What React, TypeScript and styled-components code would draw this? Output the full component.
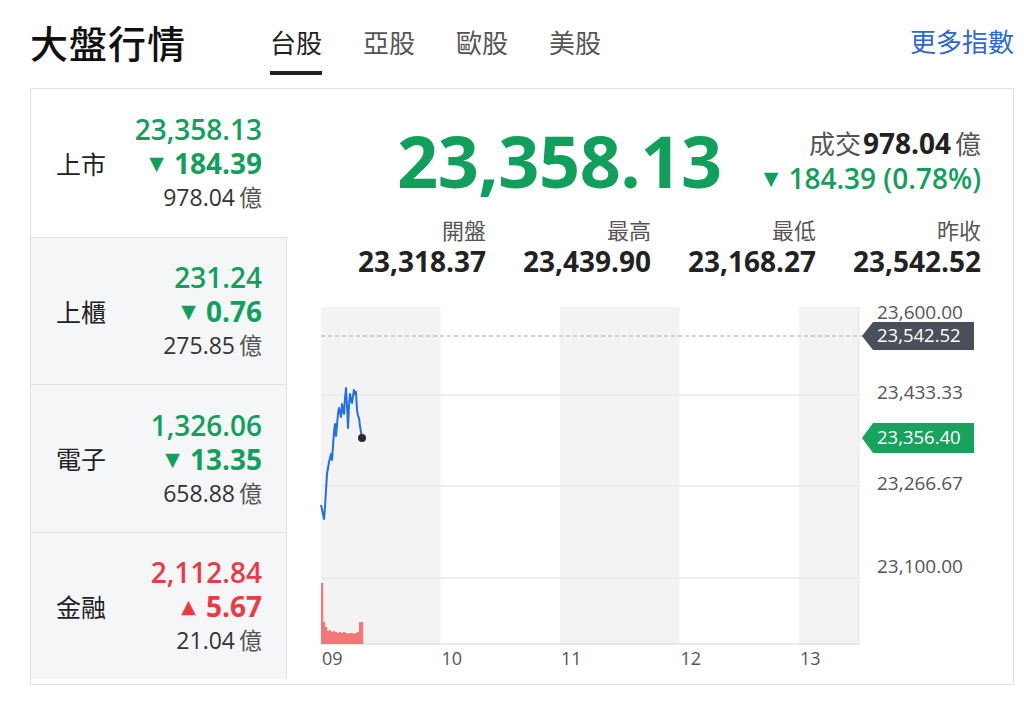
import React from "react";
import styled, { createGlobalStyle } from "styled-components";

const GREEN = "#11a05c";
const RED = "#ec3a44";

const GlobalStyle = createGlobalStyle`
  html, body {
    margin: 0;
    padding: 0;
    background: #ffffff;
    font-family: "Open Sans", "Noto Sans CJK TC", sans-serif;
    color: #222;
  }
`;

type Market = {
  name: string;
  price: string;
  change: string;
  volume: string;
  up: boolean;
};

const markets: Market[] = [
  { name: "上市", price: "23,358.13", change: "184.39", volume: "978.04", up: false },
  { name: "上櫃", price: "231.24", change: "0.76", volume: "275.85", up: false },
  { name: "電子", price: "1,326.06", change: "13.35", volume: "658.88", up: false },
  { name: "金融", price: "2,112.84", change: "5.67", volume: "21.04", up: true },
];

const stats = [
  { label: "開盤", value: "23,318.37" },
  { label: "最高", value: "23,439.90" },
  { label: "最低", value: "23,168.27" },
  { label: "昨收", value: "23,542.52" },
];

const tabs = ["台股", "亞股", "歐股", "美股"];

const App = () => {
  return (
    <>
      <GlobalStyle />
      <Page>
        <Header>
          <Title>大盤行情</Title>
          <Tabs>
            {tabs.map((t, i) => (
              <Tab key={t} active={i === 0}>
                {t}
              </Tab>
            ))}
          </Tabs>
          <MoreLink>更多指數</MoreLink>
        </Header>
        <Panel>
          <MarketList>
            {markets.map((m, i) => (
              <MarketRow key={m.name} selected={i === 0}>
                <MarketName>{m.name}</MarketName>
                <MarketValues>
                  <MarketPrice up={m.up}>{m.price}</MarketPrice>
                  <MarketChange up={m.up}>
                    <Arrow>{m.up ? "▲" : "▼"}</Arrow>
                    {m.change}
                  </MarketChange>
                  <MarketVolume>
                    {m.volume}
                    <Unit>億</Unit>
                  </MarketVolume>
                </MarketValues>
              </MarketRow>
            ))}
          </MarketList>
          <Detail>
            <Summary>
              <BigPrice>23,358.13</BigPrice>
              <SummaryInfo>
                <Turnover>
                  <Muted>成交</Muted>
                  <strong>978.04</strong>
                  <Muted>億</Muted>
                </Turnover>
                <SummaryChange>
                  <Arrow>▼</Arrow>184.39 (0.78%)
                </SummaryChange>
              </SummaryInfo>
            </Summary>
            <StatGrid>
              {stats.map((s) => (
                <Stat key={s.label}>
                  <StatLabel>{s.label}</StatLabel>
                  <StatValue>{s.value}</StatValue>
                </Stat>
              ))}
            </StatGrid>
            <Chart />
          </Detail>
        </Panel>
      </Page>
    </>
  );
};

export default App;

// intraday line, in chart coordinates
const linePoints: [number, number][] = [
  [0, 203], [2, 212], [3, 217], [4, 205], [6, 172], [8, 160], [10, 152], [11, 158],
  [13, 130], [14, 122], [15, 134], [17, 112], [18, 106], [20, 115], [21, 102],
  [22, 108], [23, 112], [24, 96], [25, 86], [26, 104], [27, 126], [28, 104],
  [29, 92], [30, 98], [31, 101], [32, 94], [33, 88], [34, 92], [35, 90],
  [36, 108], [37, 114], [38, 116], [39, 124], [41, 136],
];

const volumeBars: [number, number][] = [
  [0, 281], [2, 320], [4, 325], [6, 329], [8, 328], [10, 330], [12, 329], [14, 330],
  [16, 331], [18, 330], [20, 331], [22, 330], [24, 331], [26, 332], [28, 331],
  [30, 331], [32, 332], [34, 331], [36, 330], [38, 320], [40, 320],
];

const Chart = () => {
  const plotW = 538;
  const top = 5;
  const bottom = 342;
  const bands = [0, 119.5, 239, 358.5, 478];
  const gridYs = [93, 184, 276];
  const axis = [
    { y: 12, v: "23,600.00" },
    { y: 92, v: "23,433.33" },
    { y: 183, v: "23,266.67" },
    { y: 266, v: "23,100.00" },
  ];
  const path = linePoints.map(([x, y], i) => `${i ? "L" : "M"}${x} ${y}`).join(" ");

  return (
    <ChartSvg width={660} height={380} viewBox="0 0 660 380">
      <rect x={0} y={top} width={plotW} height={bottom - top} fill="#ffffff" />
      {bands.map((x, i) =>
        i % 2 === 0 ? (
          <rect key={x} x={x} y={top} width={Math.min(119.5, plotW - x)} height={bottom - top} fill="#f3f3f4" />
        ) : null
      )}
      {gridYs.map((y) => (
        <line key={y} x1={0} x2={plotW} y1={y} y2={y} stroke="#e9e9eb" strokeWidth={1.5} />
      ))}
      <line x1={0} x2={plotW} y1={bottom} y2={bottom} stroke="#e2e2e4" strokeWidth={1.5} />
      <line x1={plotW} x2={plotW} y1={top} y2={bottom} stroke="#e6e6e8" strokeWidth={1} />
      <line x1={0} x2={545} y1={34} y2={34} stroke="#a9a9ad" strokeWidth={1.2} strokeDasharray="4 3" />

      {volumeBars.map(([x, y]) => (
        <rect key={x} x={x} y={y} width={2.2} height={bottom - y} fill="#f47676" />
      ))}
      <path d={path} fill="none" stroke="#1f6fe5" strokeWidth={2} strokeLinejoin="round" />
      <circle cx={41} cy={136} r={4} fill="#2b2b2b" />

      {axis.map((a) => (
        <text key={a.v} x={556} y={a.y} dominantBaseline="middle" fontSize={19} fill="#555">
          {a.v}
        </text>
      ))}

      <g>
        <path d="M541 34 L552 20 H653 V48 H552 Z" fill="#4a5059" />
        <text x={556} y={35} dominantBaseline="middle" fontSize={18.5} fill="#ffffff">
          23,542.52
        </text>
      </g>
      <g>
        <path d="M541 136 L552 121 H653 V151 H552 Z" fill="#17a25e" />
        <text x={556} y={137} dominantBaseline="middle" fontSize={18.5} fill="#ffffff">
          23,356.40
        </text>
      </g>

      {bands.map((x, i) => (
        <text key={x} x={x + 1} y={358} dominantBaseline="middle" fontSize={18} fill="#555">
          {["09", "10", "11", "12", "13"][i]}
        </text>
      ))}
    </ChartSvg>
  );
};

const Page = styled.div`
  width: 1024px;
  padding: 0 10px 0 30px;
  box-sizing: border-box;
`;

const Header = styled.div`
  display: flex;
  align-items: flex-start;
  height: 88px;
`;

const Title = styled.div`
  font-family: "Noto Sans CJK TC", sans-serif;
  font-size: 38px;
  font-weight: 500;
  line-height: 84px;
  color: #111;
  letter-spacing: 1px;
`;

const Tabs = styled.div`
  display: flex;
  gap: 41px;
  margin-left: 84px;
`;

const Tab = styled.div<{ active?: boolean }>`
  box-sizing: border-box;
  height: 75px;
  padding-top: 12px;
  display: flex;
  align-items: center;
  font-family: "Noto Sans CJK TC", sans-serif;
  font-size: 26px;
  color: ${({ active }) => (active ? "#222" : "#555")};
  border-bottom: 4px solid ${({ active }) => (active ? "#222" : "transparent")};
`;

const MoreLink = styled.a`
  margin-left: auto;
  font-family: "Noto Sans CJK TC", sans-serif;
  font-size: 26px;
  line-height: 82px;
  color: #2d68d2;
  cursor: pointer;
`;

const Panel = styled.div`
  display: flex;
  width: 984px;
  height: 597px;
  box-sizing: border-box;
  border: 1px solid #e1e1e3;
`;

const MarketList = styled.div`
  display: flex;
  flex-direction: column;
  width: 256px;
  flex-shrink: 0;
`;

const MarketRow = styled.div<{ selected?: boolean }>`
  height: 147.5px;
  box-sizing: border-box;
  display: flex;
  align-items: center;
  justify-content: space-between;
  padding: 0 24px 0 25px;
  background: ${({ selected }) => (selected ? "#ffffff" : "#f5f6f8")};
  border-right: 1px solid ${({ selected }) => (selected ? "transparent" : "#e1e1e3")};
  & + & {
    border-top: 1px solid #e1e1e3;
  }
`;

const MarketName = styled.div`
  font-family: "Noto Sans CJK TC", sans-serif;
  font-size: 25px;
  color: #222;
`;

const MarketValues = styled.div`
  display: flex;
  flex-direction: column;
  align-items: flex-end;
`;

const MarketPrice = styled.div<{ up?: boolean }>`
  font-size: 28px;
  font-weight: 600;
  line-height: 34px;
  color: ${({ up }) => (up ? RED : GREEN)};
`;

const MarketChange = styled(MarketPrice)`
  font-weight: 700;
  display: flex;
  align-items: center;
`;

const Arrow = styled.span`
  font-size: 19px;
  margin-right: 10px;
  font-family: "DejaVu Sans", sans-serif;
`;

const MarketVolume = styled.div`
  font-size: 23px;
  line-height: 32px;
  color: #333;
`;

const Unit = styled.span`
  font-family: "Noto Sans CJK TC", sans-serif;
  color: #555;
  margin-left: 4px;
`;

const Detail = styled.div`
  flex: 1;
  padding: 26px 33px 0 34px;
  display: flex;
  flex-direction: column;
`;

const Summary = styled.div`
  height: 90px;
  display: flex;
  align-items: center;
  justify-content: flex-end;
  gap: 42px;
`;

const BigPrice = styled.div`
  font-size: 72px;
  font-weight: 700;
  line-height: 1;
  color: ${GREEN};
  letter-spacing: -0.5px;
`;

const SummaryInfo = styled.div`
  display: flex;
  flex-direction: column;
  align-items: flex-end;
`;

const Turnover = styled.div`
  font-size: 28px;
  line-height: 36px;
  color: #222;
  strong {
    font-weight: 700;
    margin: 0 4px 0 2px;
  }
`;

const Muted = styled.span`
  font-family: "Noto Sans CJK TC", sans-serif;
  font-size: 26px;
  color: #555;
`;

const SummaryChange = styled.div`
  display: flex;
  align-items: center;
  font-size: 28px;
  font-weight: 600;
  line-height: 34px;
  color: ${GREEN};
`;

const StatGrid = styled.div`
  display: grid;
  grid-template-columns: repeat(4, 1fr);
  margin-top: 9px;
`;

const Stat = styled.div`
  display: flex;
  flex-direction: column;
  align-items: flex-end;
`;

const StatLabel = styled.div`
  font-family: "Noto Sans CJK TC", sans-serif;
  font-size: 22px;
  line-height: 31px;
  color: #555;
`;

const StatValue = styled.div`
  font-size: 28px;
  font-weight: 700;
  line-height: 32px;
  color: #222;
`;

const ChartSvg = styled.svg`
  display: block;
  margin-top: 25px;
  font-family: "Open Sans", sans-serif;
  overflow: visible;
`;
